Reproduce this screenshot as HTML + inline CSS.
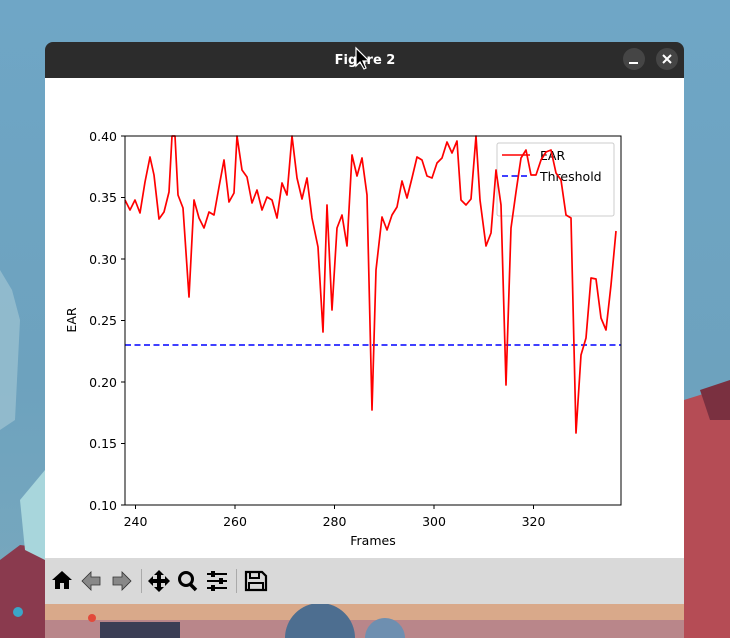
<!DOCTYPE html>
<html><head><meta charset="utf-8"><style>
html,body{margin:0;padding:0;width:730px;height:638px;overflow:hidden;font-family:"DejaVu Sans","Liberation Sans",sans-serif}
</style></head><body>
<svg width="730" height="638" viewBox="0 0 730 638" xmlns="http://www.w3.org/2000/svg" style="display:block;overflow:hidden">
<defs>
<linearGradient id="sky" x1="0" y1="0" x2="0" y2="1">
<stop offset="0" stop-color="#6fa6c6"/><stop offset="0.6" stop-color="#6da2be"/><stop offset="1" stop-color="#7aa9bd"/>
</linearGradient>
<clipPath id="c"><rect width="730" height="638"/></clipPath>
</defs>
<g clip-path="url(#c)">
<rect width="730" height="638" fill="url(#sky)"/>
<path d="M0 560 L20 545 L45 548 L45 638 L0 638Z" fill="#8a3a4e"/>
<path d="M0 270 L12 290 L20 320 L15 420 L0 430Z" fill="#a9c9d6" opacity="0.6"/>
<path d="M20 500 L45 470 L45 560 L25 550Z" fill="#a8d6dc"/>
<path d="M684 400 L700 395 L730 385 L730 638 L684 638Z" fill="#b54c55"/>
<path d="M700 390 L730 380 L730 420 L710 420Z" fill="#7a3040"/>
<rect x="45" y="604" width="639" height="34" fill="#d9a98a"/>
<rect x="45" y="620" width="639" height="18" fill="#b9868a"/>
<circle cx="320" cy="638" r="35" fill="#4d6e90"/>
<circle cx="385" cy="638" r="20" fill="#6e8fb0"/>
<rect x="100" y="622" width="80" height="16" fill="#3b3e55"/>
<circle cx="18" cy="612" r="5" fill="#3aa6c8"/>
<circle cx="92" cy="618" r="4" fill="#e24a3a"/>
</g>
<rect x="45" y="42" width="639" height="562" rx="8" fill="#2c2c2c"/>
<rect x="45" y="78" width="639" height="526" fill="#ffffff"/>
<text x="365" y="64" text-anchor="middle" font-size="13" font-weight="bold" fill="#ffffff">Figure 2</text>
<circle cx="634" cy="59" r="11" fill="#454545"/>
<rect x="629" y="62" width="9" height="2" fill="#fff"/>
<circle cx="667" cy="59" r="11" fill="#454545"/>
<path d="M663 55 L671 63 M671 55 L663 63" stroke="#fff" stroke-width="2"/>
<path d="M356 48 L356 66 L360 62 L364 69 L366 68 L363 61 L369 61Z" fill="#000" stroke="#fff" stroke-width="1.2"/>
<rect x="45" y="558" width="639" height="46" fill="#d9d9d9"/>
<g font-size="12.5" fill="#000">
<rect x="497" y="143" width="117" height="73" rx="2" fill="#fff" stroke="#cccccc"/>
<line x1="502" y1="155" x2="530" y2="155" stroke="#ff0000" stroke-width="1.6"/>
<line x1="502" y1="176" x2="530" y2="176" stroke="#0000ff" stroke-width="1.6" stroke-dasharray="6,3.5"/>
<text x="540" y="160">EAR</text>
<text x="540" y="181">Threshold</text>
<line x1="125" y1="345" x2="621" y2="345" stroke="#0000ff" stroke-width="1.6" stroke-dasharray="6,3.5"/>
<polyline fill="none" stroke="#ff0000" stroke-width="1.7" stroke-linejoin="round" points="125,200 130,210 135,200 140,213 145,182 150,157 154,175 159,219 164,212 169,192 172,136 175,136 178,195 183,208 189,297 194,200 199,218 204,228 209,212 214,215 219,187 224,160 229,202 234,193 237,136 242,170 247,177 252,203 257,190 262,210 267,197 272,200 277,218 282,183 287,195 292,136 297,178 302,199 307,178 312,218 318,247 323,332 327,205 332,310 337,228 342,215 347,246 352,155 357,176 362,158 367,195 372,410 376,270 382,217 387,230 392,215 397,207 402,181 407,198 412,178 417,157 422,160 427,176 432,178 437,163 442,158 447,142 452,153 457,141 461,200 466,205 471,199 476,136 480,200 486,246 491,233 496,170 501,205 506,385 511,228 516,192 521,158 526,150 531,175 536,175 541,160 546,152 551,150 556,173 561,180 566,215 571,218 576,433 581,355 586,338 591,278 596,279 601,318 606,330 611,285 616,231"/>
<rect x="125" y="136" width="496" height="369" fill="none" stroke="#000" stroke-width="1"/>
<g stroke="#000">
<line x1="121" y1="136" x2="125" y2="136"/><line x1="121" y1="197.5" x2="125" y2="197.5"/><line x1="121" y1="259" x2="125" y2="259"/><line x1="121" y1="320.5" x2="125" y2="320.5"/><line x1="121" y1="382" x2="125" y2="382"/><line x1="121" y1="443.5" x2="125" y2="443.5"/><line x1="121" y1="505" x2="125" y2="505"/>
<line x1="135.5" y1="505" x2="135.5" y2="509"/><line x1="235" y1="505" x2="235" y2="509"/><line x1="334.5" y1="505" x2="334.5" y2="509"/><line x1="434" y1="505" x2="434" y2="509"/><line x1="533.5" y1="505" x2="533.5" y2="509"/>
</g>
<g text-anchor="end">
<text x="117" y="141">0.40</text><text x="117" y="202">0.35</text><text x="117" y="264">0.30</text><text x="117" y="325">0.25</text><text x="117" y="387">0.20</text><text x="117" y="448">0.15</text><text x="117" y="510">0.10</text>
</g>
<g text-anchor="middle">
<text x="135.5" y="526">240</text><text x="235" y="526">260</text><text x="334.5" y="526">280</text><text x="434" y="526">300</text><text x="533.5" y="526">320</text>
<text x="373" y="545">Frames</text>
<text transform="translate(76,320) rotate(-90)">EAR</text>
</g>
</g>
<g fill="#000">
<path d="M52 580 L62 571 L72 580 L69 580 L69 589 L64 589 L64 583 L60 583 L60 589 L55 589 L55 580Z"/>
<path d="M82 581 L91 572 L91 577 L100 577 L100 585 L91 585 L91 590Z" fill="#888" stroke="#333" stroke-width="0.8"/>
<path d="M131 581 L122 572 L122 577 L113 577 L113 585 L122 585 L122 590Z" fill="#888" stroke="#333" stroke-width="0.8"/>
<rect x="141" y="569" width="1" height="24" fill="#aaa"/>
<path d="M159 570 L164 575 L161 575 L161 579 L165 579 L165 576 L170 581 L165 586 L165 583 L161 583 L161 587 L164 587 L159 592 L154 587 L157 587 L157 583 L153 583 L153 586 L148 581 L153 576 L153 579 L157 579 L157 575 L154 575Z"/>
<circle cx="186" cy="579" r="6.5" fill="none" stroke="#000" stroke-width="3"/>
<path d="M190 584 L196 590" stroke="#000" stroke-width="3.5"/>
<g stroke="#000" stroke-width="2"><line x1="207" y1="574" x2="227" y2="574"/><line x1="207" y1="581" x2="227" y2="581"/><line x1="207" y1="588" x2="227" y2="588"/></g>
<rect x="211" y="571" width="4" height="6"/><rect x="219" y="578" width="4" height="6"/><rect x="211" y="585" width="4" height="6"/>
<rect x="236" y="569" width="1" height="24" fill="#aaa"/>
<path d="M246 572 L262 572 L266 576 L266 590 L246 590Z" fill="none" stroke="#000" stroke-width="2.2"/>
<rect x="250" y="572" width="9" height="6" fill="none" stroke="#000" stroke-width="2"/>
<rect x="249" y="583" width="14" height="7" fill="none" stroke="#000" stroke-width="2"/>
</g>
</svg>
</body></html>
